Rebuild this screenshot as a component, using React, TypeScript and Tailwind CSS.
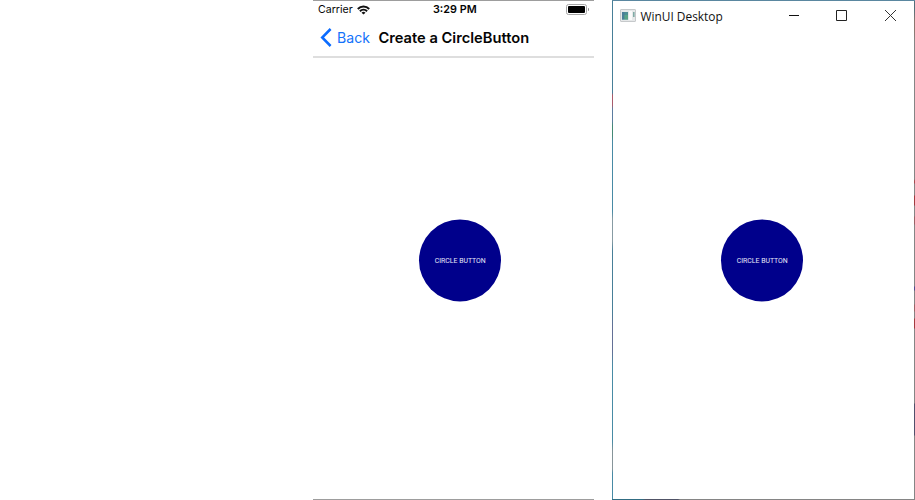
import type { ReactNode } from 'react';

function CircleButton() {
  return (
    <button className="flex size-[82px] translate-y-[0.4px] items-center justify-center rounded-full bg-[#00008b] font-[Roboto,sans-serif] text-[6.9px] leading-none whitespace-nowrap text-[#e8e8f8]">
      <span className="pt-[2px] pl-[0.5px]">CIRCLE BUTTON</span>
    </button>
  );
}

function WifiIcon() {
  return (
    <svg className="ml-[4px] h-[10px] w-[13px]" viewBox="0 0 13 10" fill="none" stroke="#111" strokeWidth="2">
      <path d="M.8 4a8 8 0 0 1 11.4 0" />
      <path d="M2.9 6.2a5.1 5.1 0 0 1 7.2 0" />
      <path d="M6.5 9.6 4.5 7.7a2.8 2.8 0 0 1 4 0z" fill="#111" stroke="none" />
    </svg>
  );
}

function BatteryIcon() {
  return (
    <div className="flex items-center">
      <div className="h-[11px] w-[21px] rounded-[2.5px] border border-[#a6a6a6] p-px">
        <div className="h-full w-full rounded-[1px] bg-black" />
      </div>
      <div className="ml-px h-[3px] w-px rounded-r-full bg-[#8e8e8e]" />
    </div>
  );
}

function Phone() {
  return (
    <section className="flex h-full w-[281px] flex-col border-y border-[#9d9d9d] font-[Inter,sans-serif] text-[#050505]">
      <div className="flex h-[17px] items-center pr-[5px] pl-[5px] text-[11px] leading-none">
        <div className="flex w-[115px] items-center">
          <span className="pt-[2px] text-[10.6px]">Carrier</span>
          <WifiIcon />
        </div>
        <span className="w-[133px] pt-[2px] text-[10.8px] font-semibold">3:29 PM</span>
        <BatteryIcon />
      </div>
      <div className="flex h-[38px] shrink-0 items-center pl-[7px] leading-none">
        <svg className="h-[19px] w-[12px]" viewBox="0 0 12 19" fill="none" stroke="#0b6cff" strokeWidth="2.5">
          <path d="M10.6 1 2.2 9.5l8.4 8.5" />
        </svg>
        <span className="ml-[5px] w-[41.4px] pt-[2px] text-[14.1px] text-[#1472fa]">Back</span>
        <h1 className="pt-[2px] text-[14.7px] font-semibold whitespace-nowrap">Create a CircleButton</h1>
      </div>
      <div className="h-[2px] shrink-0 bg-[#dedede]" />
      <div className="pt-[161px] pl-[106px]">
        <CircleButton />
      </div>
    </section>
  );
}

function Caption({ children }: { children: ReactNode }) {
  return (
    <svg className="size-[11px]" viewBox="0 0 11 11" fill="none" stroke="#333" strokeWidth="1">
      {children}
    </svg>
  );
}

function DesktopWindow() {
  return (
    <section className="flex h-full w-[303px] flex-col">
      <div className="h-px shrink-0 bg-[#5a87a0]" />
      <div className="flex grow">
        <div className="w-px bg-[linear-gradient(#477f98_0_92px,#a95b6b_94px_104px,#5b7ca0_108px_120px,#438974_125px_135px,#478aa5_140px_210px,#879ba3_218px_240px,#477f98_250px_310px,#637096_325px_350px,#488ba5_365px_440px,#87959a_450px_468px,#478aa5_472px)]" />
        <div className="w-[301px]">
          <header className="flex h-[29px] items-center pl-[7px]">
            <svg className="h-[13px] w-[16px]" viewBox="0 0 16 13">
              <rect x=".5" y=".5" width="15" height="12" rx=".5" fill="#e6e8e9" stroke="#c6c9cb" />
              <path d="M2 3h6v7.5H2z" fill="#4f8f94" />
              <path d="M2 3h2.5v7.5H2z" fill="#4b7f98" />
              <path d="M4.5 6H8v4.5H4.5z" fill="#5aa487" />
              <path d="M9 2h3v9H9z" fill="#fafafa" />
              <path d="M13 3h1.6v5H13z" fill="#7faaa5" />
            </svg>
            <h2 className="mt-[3px] ml-[4.5px] w-[147.5px] font-['Open_Sans',sans-serif] text-[11.9px] leading-none whitespace-nowrap text-[#111]">WinUI Desktop</h2>
            <div className="flex">
              <Caption><path d="M1 5.5h10" stroke="#111" /></Caption>
              <div className="mr-[38px] ml-[37px]">
                <Caption><path d="M.5.5h10v10H.5z" stroke="#222" /></Caption>
              </div>
              <Caption><path d="m0 0 11 11M11 0 0 11" /></Caption>
            </div>
          </header>
          <div className="pt-[189px] pl-[108px]">
            <CircleButton />
          </div>
        </div>
        <div className="w-px bg-[linear-gradient(#526f7a_0_8px,#8b7770_20px_30px,#858585_40px_178px,#a94b50_180px_182px,#858585_183px_194px,#a33b3f_195px_204px,#858585_205px_215px,#9c6266_216px_223px,#858585_224px_285px,#514990_286px_289px,#858585_290px_303px,#9c6266_304px_310px,#858585_311px_317px,#a33b3f_318px_327px,#858585_328px_402px,#50506c_403px_434px,#858585_435px)]" />
      </div>
      <div className="h-px shrink-0 bg-[linear-gradient(90deg,#316d83_0_30px,#505366_34px_66px,#858585_68px)]" />
    </section>
  );
}

export default function App() {
  return (
    <main className="flex h-[500px] w-[915px] justify-end gap-[18px] overflow-hidden bg-white">
      <Phone />
      <DesktopWindow />
    </main>
  );
}
